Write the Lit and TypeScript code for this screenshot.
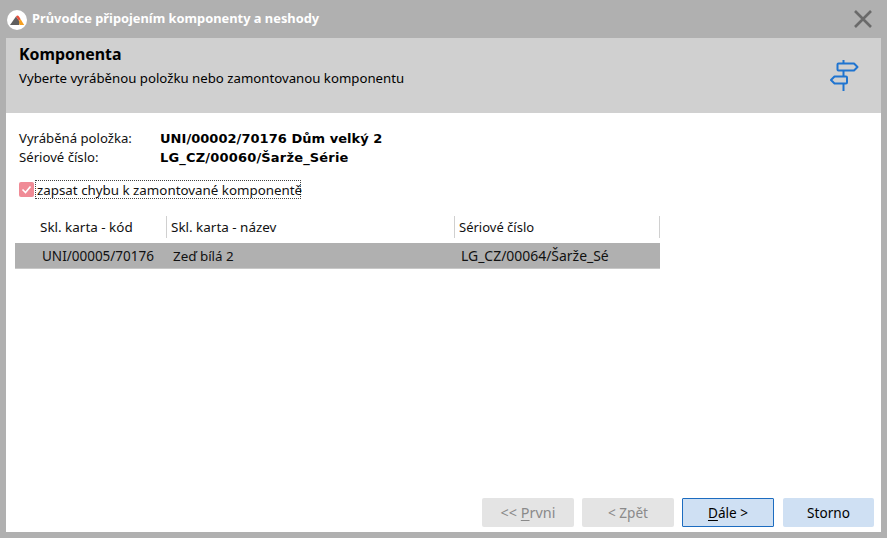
import { LitElement, html, css } from "lit";
import { customElement } from "lit/decorators.js";

@customElement("app-root")
export class AppRoot extends LitElement {
  static styles = css`
    :host { display: block; width: 887px; height: 538px; font-family: "Noto Sans", "Liberation Sans", sans-serif; font-size: 13.2px; color: #111; }
    * { box-sizing: border-box; }
    .frame { width: 887px; height: 538px; background: #b0b0b0; display: flex; flex-direction: column; padding: 0 6px 6px; }
    .title { height: 38px; flex: none; display: flex; align-items: center; margin-left: -6px; margin-right: -6px; padding: 0 14px 0 7px; }
    .logo { width: 20px; height: 20px; flex: none; margin-top: 1px; }
    .title-text { margin-left: 5px; margin-bottom: 3px; color: #fff; font-weight: 700; font-size: 12.85px; flex: 1; }
    .close { width: 20px; height: 20px; flex: none; }
    .panel { flex: 1; background: #fff; display: flex; flex-direction: column; min-height: 0; }
    .head { height: 75px; flex: none; background: #d0d0d0; display: flex; justify-content: space-between; padding: 6px 22px 0 13px; }
    .head h1 { margin: 0; font-size: 15.9px; font-weight: 700; line-height: 20px; color: #000; }
    .head p { margin: 5px 0 0; line-height: 18px; font-size: 13.23px; color: #000; }
    .sign { width: 29px; height: 32px; margin-top: 16px; }
    .body { flex: 1; display: flex; flex-direction: column; padding: 16px 0 0 9px; min-height: 0; }
    .info { display: grid; grid-template-columns: 141px auto; justify-content: start; margin-left: 4px; line-height: 19px; font-size: 13.15px; }
    .info b { font-family: "DejaVu Sans", sans-serif; font-size: 13px; font-weight: 700; color: #000; letter-spacing: 0.04px; }
    .info b.serial { letter-spacing: 0.18px; }
    .check { display: flex; align-items: center; margin: 13px 0 0 4px; height: 19px; }
    .box { width: 15px; height: 15px; background: #f08b96; border-radius: 2px; display: flex; align-items: center; justify-content: center; }
    .label { border: 1px dotted #444; margin-left: 1px; padding: 0 0 0 1px; height: 19px; line-height: 18px; width: 266px; white-space: nowrap; font-size: 13.35px; }
    .table { width: 645px; margin-top: 17px; }
    .thead, .row { display: grid; grid-template-columns: 152px 288px 205px; }
    .thead { height: 26px; align-items: stretch; margin-bottom: 1px; }
    .th { border-right: 1px solid #d0d0d0; padding-left: 25px; line-height: 23px; height: 22px; white-space: nowrap; font-size: 13.45px; }
    .th + .th { padding-left: 4px; }
    .th:first-child { border-right: 0; width: 152px; }
    .th:nth-child(2) { border-left: 1px solid #d0d0d0; margin-left: -1px; }
    .th:nth-child(3) { font-size: 13px; }
    .row { height: 26px; background: #b0b0b0; border-bottom: 1px solid #c8c8c8; line-height: 26px; font-size: 13.4px; }
    .row span { padding-left: 6px; white-space: nowrap; overflow: hidden; }
    .row span:first-child { padding-left: 27px; font-size: 13.5px; }
    .row span:last-child { font-size: 13.95px; }
    .foot { margin-top: auto; display: flex; justify-content: flex-end; gap: 8px; padding: 0 7px 5px 0; }
    button { width: 92px; height: 29px; border: 1px solid transparent; border-radius: 2px; font: inherit; font-size: 13.6px; padding: 0; color: #000; background: #cfe0f3; }
    button[disabled] { background: #e4e4e4; color: #8a8a8a; }
    button.first { font-size: 14.4px; }
    button.def { border-color: #1c6cc0; border-radius: 1px; }
    button.s { width: 91px; margin-left: 1px; }
    u { text-underline-offset: 2px; }
  `;

  render() {
    return html`<div class="frame">
      <div class="title">
        <svg class="logo" viewBox="0 0 20 20">
          <circle cx="10" cy="10" r="10" fill="#fff"/>
          <path d="M3 15 9 6.500l4 5.500-1 3z" fill="#5f5f5f"/>
          <path d="M9 6.500c1-1.300 2-1.300 3 0l1.500 2.500-1.500 2z" fill="#e8503c"/>
          <path d="M12 11l1.500-2 3.700 6H12.500z" fill="#f6a020"/>
        </svg>
        <span class="title-text">Průvodce připojením komponenty a neshody</span>
        <svg class="close" viewBox="0 0 20 20"><path d="M2 2l16 16M18 2 2 18" stroke="#6a6a6a" stroke-width="2.600" fill="none"/></svg>
      </div>
      <div class="panel">
        <div class="head">
          <div><h1>Komponenta</h1><p>Vyberte vyráběnou položku nebo zamontovanou komponentu</p></div>
          <svg class="sign" viewBox="0 0 29 32" fill="none" stroke="#1f74d0" stroke-width="2" stroke-linejoin="round">
            <path d="M13.500 0v3.500M13.500 10.500v6M13.500 23.500v7.500"/>
            <path d="M8.500 3.500H24l3.500 3.500-3.500 3.500H8.500q-1 0-1-1v-5q0-1 1-1z"/>
            <path d="M16 16.500H4.500L1 20l3.500 3.500H16q1 0 1-1v-5q0-1-1-1z"/>
          </svg>
        </div>
        <div class="body">
          <div class="info">
            <span>Vyráběná položka:</span><b>UNI/00002/70176 Dům velký 2</b>
            <span>Sériové číslo:</span><b class="serial">LG_CZ/00060/Šarže_Série</b>
          </div>
          <div class="check">
            <span class="box"><svg width="11" height="11" viewBox="0 0 11 11"><path d="M1.500 5.500l3 3 5-6" stroke="#fff" stroke-width="1.600" fill="none"/></svg></span>
            <span class="label">zapsat chybu k zamontované komponentě</span>
          </div>
          <div class="table">
            <div class="thead">
              <div class="th">Skl. karta - kód</div>
              <div class="th">Skl. karta - název</div>
              <div class="th">Sériové číslo</div>
            </div>
            <div class="row"><span>UNI/00005/70176</span><span>Zeď bílá 2</span><span>LG_CZ/00064/Šarže_Sé</span></div>
          </div>
          <div class="foot">
            <button class="first" disabled>&lt;&lt; <u>P</u>rvni</button>
            <button disabled>&lt; Zpět</button>
            <button class="def"><u>D</u>ále &gt;</button>
            <button class="s">Storno</button>
          </div>
        </div>
      </div>
    </div>`;
  }
}
